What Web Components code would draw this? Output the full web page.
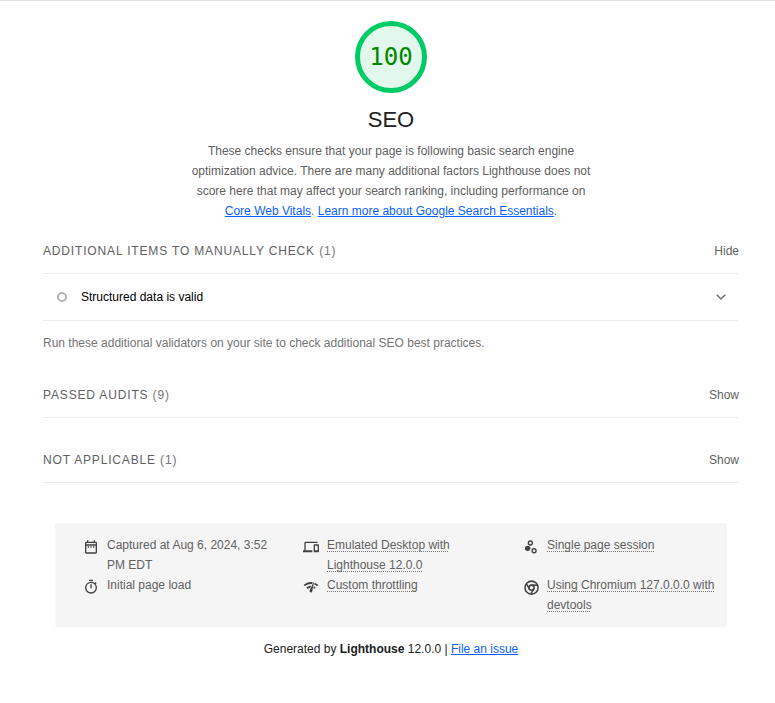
<!DOCTYPE html>
<html lang="en">
<head>
<meta charset="utf-8">
<title>Lighthouse Report – SEO</title>
<meta name="viewport" content="width=device-width">
<style>
  body { margin: 0; background: #fff; color: #212121; font: 12px/20px "Liberation Sans", Arial, sans-serif; }
</style>
</head>
<body>
<lh-report>
  <lh-category score="100" name="SEO">
    These checks ensure that your page is following basic search engine optimization advice. There are many additional factors Lighthouse does not score here that may affect your search ranking, including performance on
    <lh-link href="#vitals">Core Web Vitals</lh-link>. <lh-link href="#essentials">Learn more about Google Search Essentials</lh-link>.
  </lh-category>
  <lh-clump name="Additional items to manually check" count="1" open>
    <lh-audit>Structured data is valid</lh-audit>
    <span slot="note">Run these additional validators on your site to check additional SEO best practices.</span>
  </lh-clump>
  <lh-clump name="Passed audits" count="9"></lh-clump>
  <lh-clump name="Not applicable" count="1"></lh-clump>
  <lh-meta slot="footer">
    <lh-meta-item icon="date">Captured at Aug 6, 2024, 3:52 PM EDT</lh-meta-item>
    <lh-meta-item icon="devices" tip>Emulated Desktop with Lighthouse 12.0.0</lh-meta-item>
    <lh-meta-item icon="samples" tip>Single page session</lh-meta-item>
    <lh-meta-item icon="stopwatch">Initial page load</lh-meta-item>
    <lh-meta-item icon="network" tip>Custom throttling</lh-meta-item>
    <lh-meta-item icon="chromium" tip>Using Chromium 127.0.0.0 with devtools</lh-meta-item>
  </lh-meta>
  <span slot="credit">Generated by <b>Lighthouse</b> 12.0.0 | <lh-link href="#issue">File an issue</lh-link></span>
</lh-report>
<script>
const define = (name, render) => customElements.define(name, class extends HTMLElement {
  connectedCallback() {
    if (!this.shadowRoot) this.attachShadow({ mode: 'open' }).innerHTML = render(this);
  }
});

define('lh-report', () => `
  <style>
    :host { display: block; border-top: 1px solid #e0e0e0; padding: 20px 36px 40px 43px; }
    footer { margin: 40px 12px 0; }
    p { margin: 12px 0 0; text-align: center; }
  </style>
  <main><slot></slot></main>
  <footer><slot name="footer"></slot><p><slot name="credit"></slot></p></footer>`);

define('lh-link', el => `
  <style>
    :host { display: inline; }
    a { color: #0b5fff; text-decoration: underline; }
  </style><a href="${el.getAttribute('href')}"><slot></slot></a>`);

define('lh-category', el => `
  <style>
    :host { display: flex; flex-direction: column; align-items: center; margin-bottom: 20px; text-align: center; color: #616161; }
    .gauge { box-sizing: border-box; width: 72px; height: 72px; border: 5px solid #0c6; border-radius: 50%; background: #e3f8ed;
      display: grid; place-items: center; color: #080; font: 24px/24px "DejaVu Sans Mono", monospace; }
    h2 { margin: 11px 0 5px; font-size: 22px; line-height: 32px; font-weight: 400; color: #212121; }
    p { margin: 0; max-width: 400px; }
  </style>
  <div class="gauge">${el.getAttribute('score')}</div>
  <h2>${el.getAttribute('name')}</h2>
  <p><slot></slot></p>`);

define('lh-clump', el => {
  const open = el.hasAttribute('open');
  return `
  <style>
    :host { display: block; margin-bottom: 32px; }
    header { display: flex; justify-content: space-between; padding-bottom: 12px; border-bottom: 1px solid #ebebeb; color: #616161; }
    h3 { margin: 0; font-size: 12px; font-weight: 400; letter-spacing: 0.07em; text-transform: uppercase; }
    h3 span { color: #757575; }
    button { border: 0; padding: 0; background: none; font: inherit; color: inherit; cursor: pointer; }
    p { margin: 12px 0 0; color: #757575; }
  </style>
  <header><h3>${el.getAttribute('name')} <span>(${el.getAttribute('count')})</span></h3>
  <button type="button" aria-expanded="${open}">${open ? 'Hide' : 'Show'}</button></header>
  ${open ? '<slot></slot><p><slot name="note"></slot></p>' : ''}`;
});

define('lh-audit', () => `
  <style>
    :host { display: block; border-bottom: 1px solid #ebebeb; }
    button { display: flex; align-items: center; width: 100%; padding: 13px 12px 13px 14px; border: 0; background: none;
      font: inherit; color: #000; text-align: left; cursor: pointer; }
    i { box-sizing: border-box; width: 10px; height: 10px; border: 2px solid #b3b3b3; border-radius: 50%; margin-right: 14px; }
    svg { margin-left: auto; }
  </style>
  <button type="button" aria-expanded="false"><i></i><slot></slot>
    <svg width="12" height="12" viewBox="0 0 12 12" fill="none" stroke="#757575" stroke-width="1.6"><path d="M1.7 3.8 6 8l4.3-4.2"/></svg>
  </button>`);

define('lh-meta', () => `
  <style>
    :host { display: grid; grid-template-columns: repeat(3, 1fr); column-gap: 24px; grid-auto-rows: minmax(40px, auto);
      padding: 12px 8px 12px 28px; background: #f5f5f5; border-radius: 3px; color: #616161; }
  </style><slot></slot>`);

const icons = {
  date: '<path d="M7 11h2v2H7v-2zm14-5v14a2 2 0 01-2 2H5a2 2 0 01-2-2V6c0-1.1.9-2 2-2h1V2h2v2h8V2h2v2h1a2 2 0 012 2zM5 8h14V6H5v2zm14 12V10H5v10h14zm-4-7h2v-2h-2v2zm-4 0h2v-2h-2v2z"/>',
  devices: '<path d="M4 6h18V4H4a2 2 0 00-2 2v11H0v3h14v-3H4V6zm19 2h-6a1 1 0 00-1 1v10c0 .6.5 1 1 1h6c.6 0 1-.5 1-1V9c0-.6-.5-1-1-1zm-1 9h-4v-7h4v7z"/>',
  samples: '<circle cx="7" cy="14" r="4"/><g fill="none" stroke="#424242" stroke-width="2"><circle cx="11" cy="6" r="3"/><circle cx="16.6" cy="17.6" r="3"/></g>',
  stopwatch: '<path d="M15 1H9v2h6V1zm-4 13h2V8h-2v6zm8.1-6.6L20.5 6l-1.4-1.4L17.7 6A9 9 0 0012 4a9 9 0 109 9 8.9 8.9 0 00-2-5.6zM12 20a7 7 0 110-14 7 7 0 010 14z"/>',
  network: '<path d="M15.9 5c-.2 0-.3 0-.4.2v.2L10.1 17a2 2 0 00-.2 1 2 2 0 004 .4l2.4-12.9c0-.3-.2-.5-.5-.5zM1 9l2 2c2.9-2.9 6.8-4 10.5-3.6l1.2-2.7C10 3.8 4.7 5.3 1 9zm20 2l2-2a15.4 15.4 0 00-5.6-3.5l-.5 2.8c1.5.6 2.9 1.4 4.1 2.7zm-4 4l2-2a8 8 0 00-2.7-2l-.5 2.9 1.2 1.1zM5 13l2 2a7.1 7.1 0 014-2l1.3-2.9C9.7 10.1 7 11 5 13z"/>',
  chromium: '<g fill="none" stroke="#424242" stroke-width="2.3"><circle cx="12.8" cy="13" r="9.8"/><circle cx="12.8" cy="13" r="3.8"/><path d="M12.8 9.2h9"/><path d="M12.8 9.2h9" transform="rotate(120 12.8 13)"/><path d="M12.8 9.2h9" transform="rotate(240 12.8 13)"/></g>'
};

define('lh-meta-item', el => `
  <style>
    :host { display: flex; gap: 8px; }
    svg { flex: none; margin-top: 4px; fill: #424242; overflow: visible; }
    .tip { text-decoration: underline dotted #757575 1px; text-underline-offset: 2px; text-decoration-skip-ink: none; cursor: pointer; }
  </style>
  <svg width="16" height="16" viewBox="0 0 24 24" aria-hidden="true">${icons[el.getAttribute('icon')]}</svg>
  <div><span class="${el.hasAttribute('tip') ? 'tip' : ''}"><slot></slot></span></div>`);
</script>
</body>
</html>
